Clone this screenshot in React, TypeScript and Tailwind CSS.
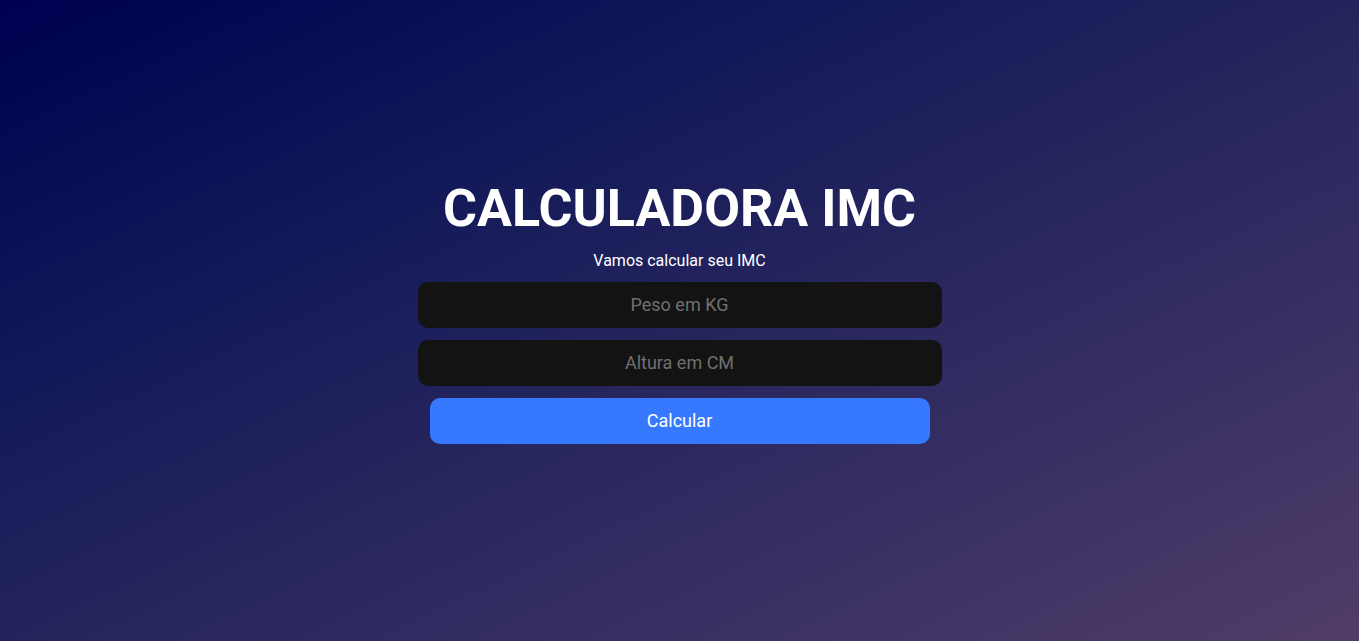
export default function App() {
  return (
    <div
      className="h-screen w-full flex flex-col items-center justify-center pb-[22px] bg-gradient-to-br from-[#000050] to-[#503c68] text-white"
      style={{ fontFamily: 'Roboto, "Noto Sans", sans-serif' }}
    >
      <div className="flex flex-col items-center w-[524px]">
        <h1 className="text-[52px] font-bold leading-tight">CALCULADORA IMC</h1>
        <p className="text-base mt-2 mb-[9px]">Vamos calcular seu IMC</p>
        <input
          type="text"
          placeholder="Peso em KG"
          className="w-full h-[46px] rounded-[10px] bg-[#131313] text-center text-lg text-white placeholder:text-[#707070] outline-none"
        />
        <input
          type="text"
          placeholder="Altura em CM"
          className="w-full h-[46px] mt-3 rounded-[10px] bg-[#131313] text-center text-lg text-white placeholder:text-[#707070] outline-none"
        />
        <button className="w-[500px] h-[46px] mt-3 rounded-[10px] bg-[#3679ff] text-lg text-white">
          Calcular
        </button>
      </div>
    </div>
  );
}
